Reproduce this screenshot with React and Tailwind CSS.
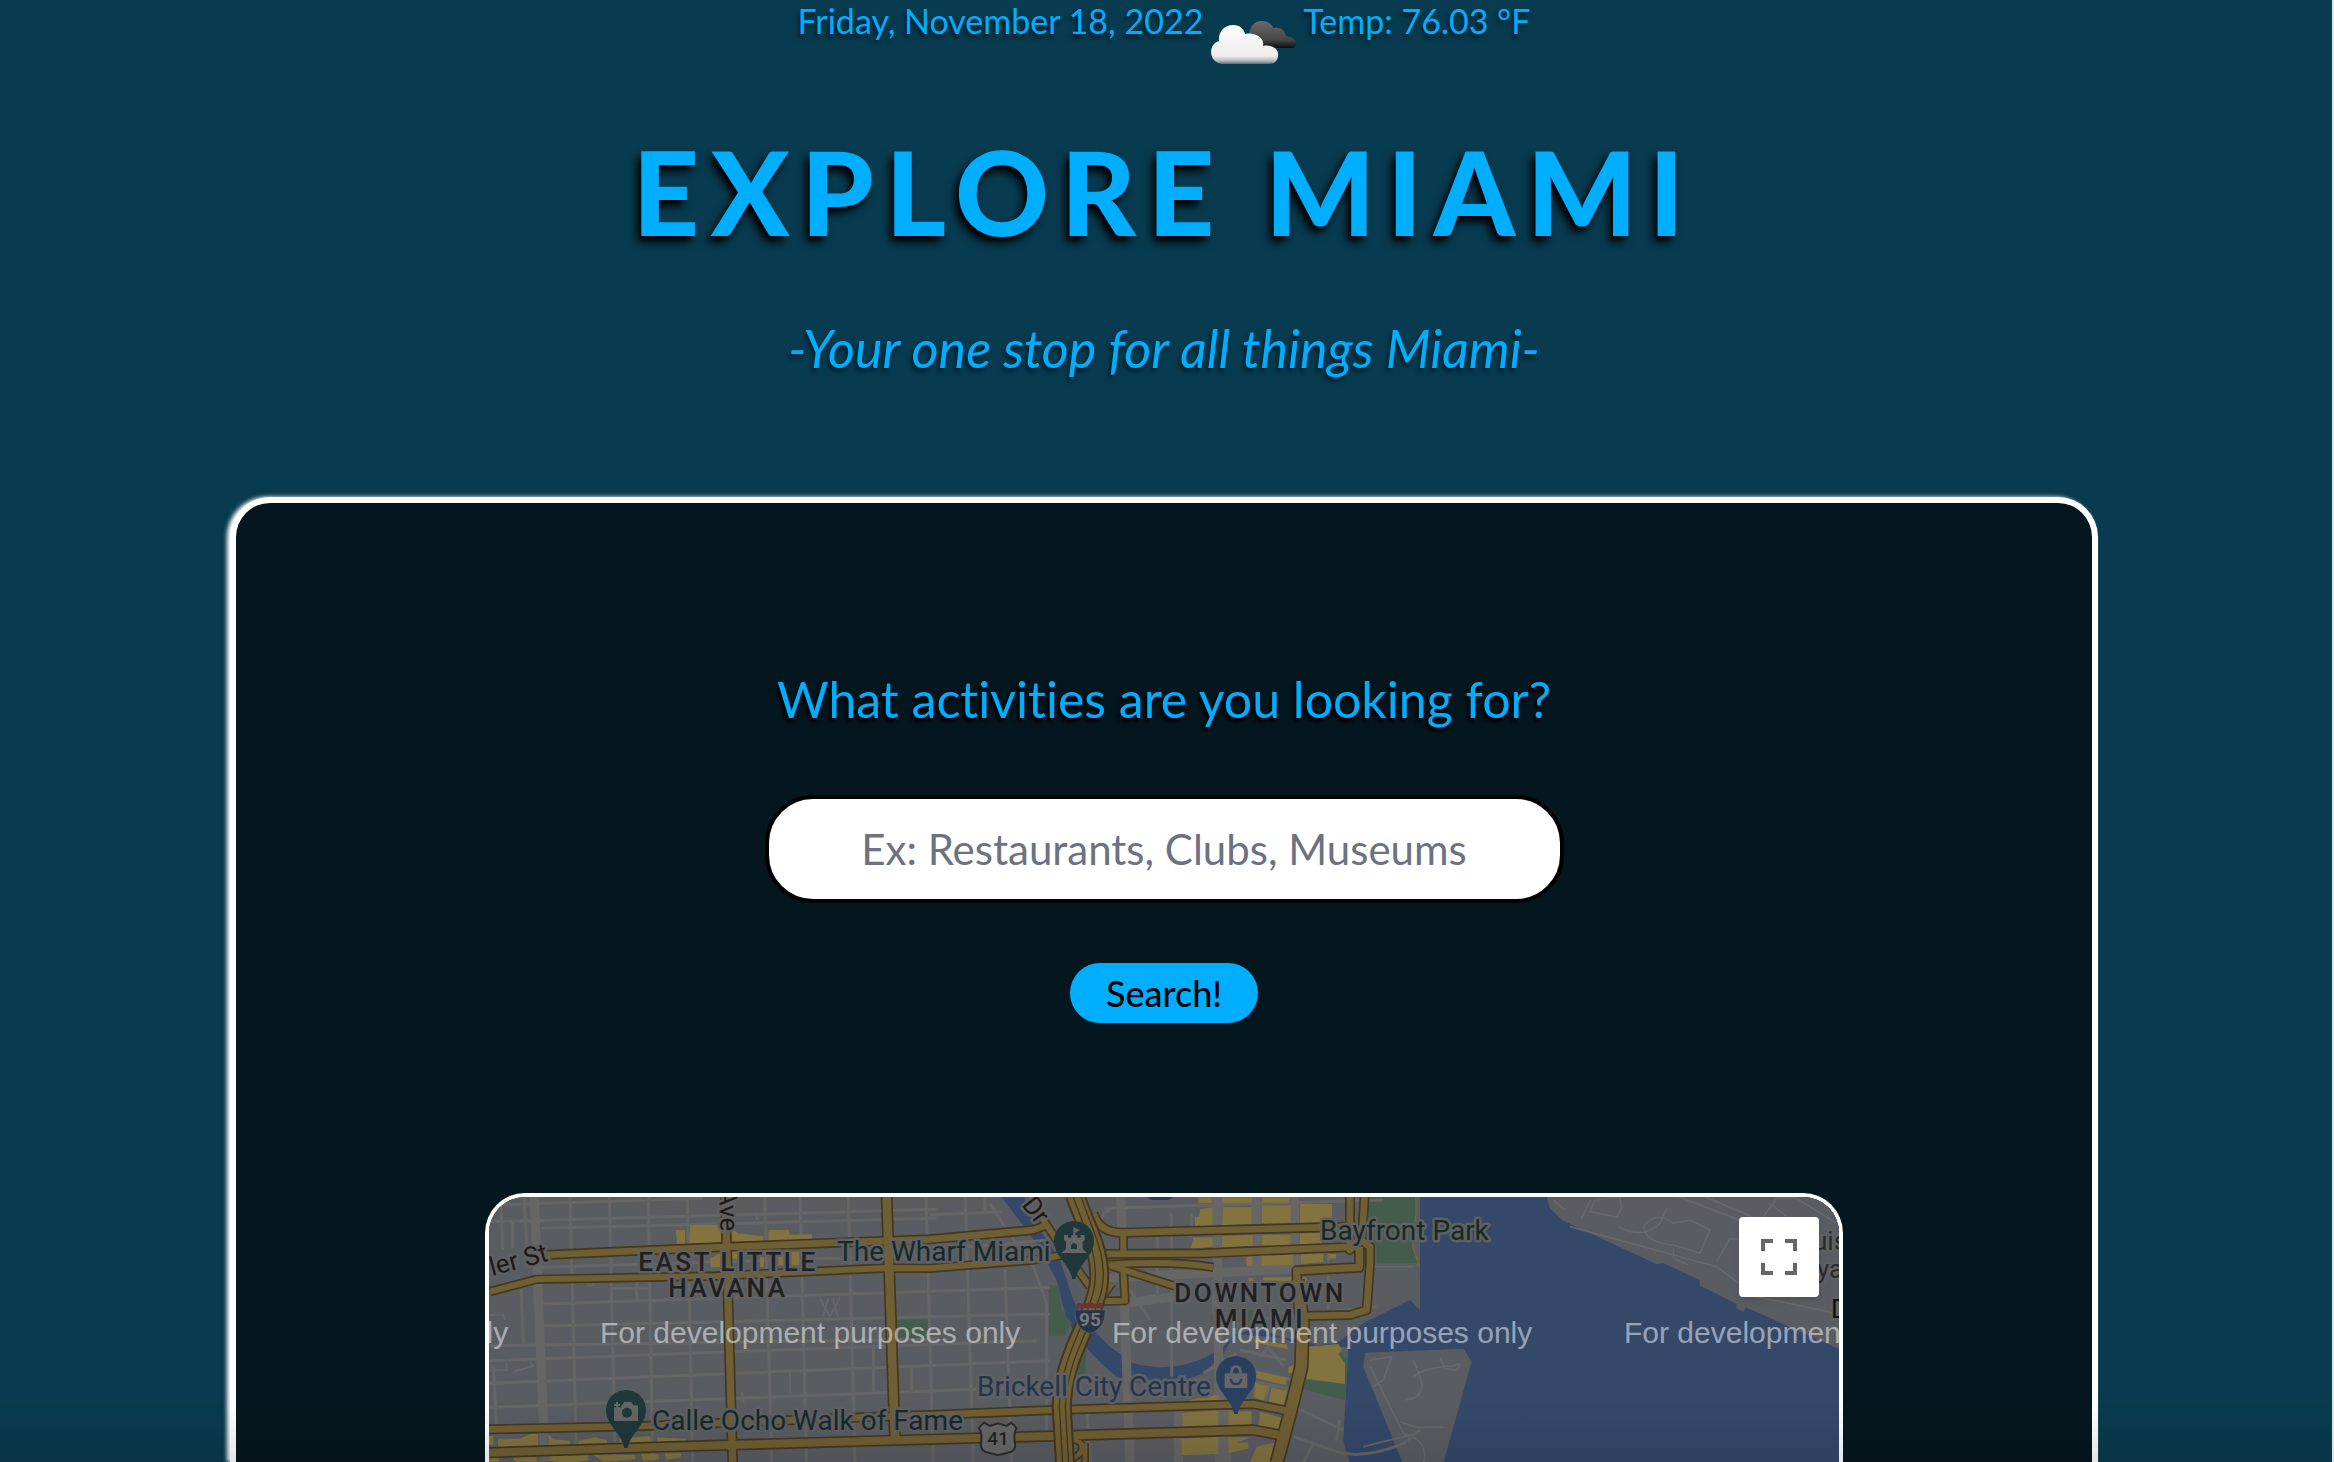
import React from "react";

const LAND = "#595c61";
const STREET = "#666666";
const WATER = "#34486a";
const PARK = "#435c4c";
const BUILT = "#82733f";

/* Map geometry is drawn in thirds of a pixel. */
const water = [
  "M1590 45L1700 190L1760 300L1790 420Q1850 520 1940 590L2010 610L2120 610L2200 580L2260 520L2290 470L2360 440L2500 500L2600 490L2680 430L2820 360L2850 390L2850 45L4110 45V850H2640L2620 780L2635 500L2560 500L2480 478L2300 462Q2240 530 2140 555Q2060 570 1990 550L1920 500L1850 430L1810 360L1770 240L1690 120L1660 45Z",
];
const land = [
  "M3228 45L3240 85L3275 120L3560 253L3580 250L3690 300L3688 316L3800 372L3797 384L3820 395L3828 382L4110 508V45Z",
  "M2685 518L2980 506L3005 545L2920 850H2798L2680 560Z",
  "M2838 45L2850 345L2700 400L2680 45Z",
];
const parks = [
  "M2690 45H2840V100L2828 200L2845 250L2720 250L2720 200L2690 150Z",
  "M1737 315L1764 318L1775 390L1805 430L1785 467H1737Z",
  "M1278 420L1372 416L1375 478L1283 480Z",
  "M1830 520L1850 500L1845 590L1820 620Z",
  "M2510 600L2610 610L2620 540L2600 505L2635 540L2625 660L2500 628Z",
  "M2330 390H2350V450H2325Z",
];
const built = [
  "M617 150H645V195H622ZM660 135H757V190H658ZM785 140L802 160L880 168V185H785ZM895 150H955L960 164L1026 163V178L895 186Z",
  "M720 235L745 222H752V262H722ZM785 210H802V238H785ZM870 232H882V260H870ZM925 215H988V256H925Z",
  "M57 768H70V795H57ZM84 778L150 776L180 762H204V798L84 802ZM236 764L250 778L300 782V797H236ZM325 783L375 772L410 780V795H325ZM448 775L540 768L545 790H448ZM560 772L648 776V786L560 788Z",
  "M57 832H86V850H57ZM125 828L200 826V850H140ZM238 824L355 822V840L300 850L238 842ZM370 824H496V838L400 845ZM512 822H566V838L520 843ZM582 820H633V832L590 840Z",
  "M2185 52H2225V70H2185ZM2255 52H2345V70H2255ZM2375 52H2458V68H2375ZM2190 88L2228 82V138H2175V110H2187ZM2258 82H2345V132L2256 136ZM2375 76H2462V130H2375ZM2490 72H2586V126L2490 128Z",
  "M2170 172H2228V200L2162 206ZM2256 168L2348 164V198L2256 202ZM2375 164H2462V196L2375 200ZM2490 160L2555 158V194L2490 196ZM2328 230H2348V258H2330ZM2375 224L2470 220V254L2375 258ZM2492 218L2560 214V246L2492 252ZM2575 222H2598V236H2575Z",
  "M2335 294H2350V304H2335ZM2380 292H2510V304H2380ZM2350 478L2450 494L2455 508L2355 488Z",
  "M2515 500L2605 492L2615 508L2605 524L2625 550V612L2510 596Z",
  "M2360 574L2450 592L2448 616L2358 594ZM2455 560L2470 556V580H2455ZM2355 608L2395 618L2382 662L2352 652ZM2405 622L2450 634L2440 680L2396 664ZM2245 645L2245 664L2148 666L2190 652Z",
  "M2138 698L2245 690V738L2138 742ZM2275 694H2345V736L2275 738ZM2370 696L2440 714L2430 752L2366 738ZM2135 776L2245 770V822L2135 826ZM2275 772H2340L2300 788H2335V806L2275 820ZM2360 800L2420 786L2412 846H2340Z",
];

const thinStreets = [
  "M57 125L1400 88M57 75L700 55M215 145L1400 115M215 262L1400 225M220 372L1740 322M215 438L1740 402M57 497L1400 478M57 542L1700 482M57 610L1740 542M57 682L1740 620M1380 210L1740 180M1380 104L1600 95",
  "M300 51L320 850M418 51L436 850M535 51L548 850M652 51L668 850M884 51L905 850M990 51L1010 850M1135 51L1155 850M1368 51L1390 850M92 51L98 210M128 125V205M162 51L170 200M152 300L160 490M70 560L80 740",
  "M1486 51L1510 850M1605 270L1625 850M1560 70Q1620 170 1690 260L1730 370V780M1850 680L1862 850M420 325H535M500 300V360M1210 500V635M1325 565V640M1545 100V50",
  "M1900 85L2740 60M1960 300L2040 420M1920 90Q1880 100 1900 160M2165 100V170M2062 150V350M2105 100V590M2230 300V400M2575 205V430M2360 420L2720 380M2310 510L2450 540M2200 580L2300 520",
  "M2370 530L2395 500L2440 560M2350 574L2470 600M2340 602L2460 628M2400 610L2385 670M2450 620L2430 690M2470 770L2600 815Q2680 840 2800 790L2850 750",
  "M2470 680L2620 750M2530 790L2500 850M2610 720L2600 780",
];
const wideStreets = [
  "M193 51L225 850M1952 51L1980 850M2240 51L2250 850M2357 51L2362 260M2472 51L2478 290",
  "M1900 295L2500 265M1950 370L2120 350M2125 680V850M2270 600V850",
];
const faintStreets = [
  "M60 405H100L106 420M60 570H110V545M130 575L190 558L180 545M855 95L862 120M1050 355L1080 410L1110 352M1058 410L1075 355M1088 355L1104 412M960 575V640M815 635L822 670M350 290L355 315H370V300",
  "M3360 60L3335 115M3375 60L3450 52L3455 85L3440 112L3360 95ZM3445 140Q3520 180 3570 130L3590 85M3520 140Q3560 90 3610 130L3660 120L3720 150L3690 220L3610 195Q3530 190 3520 140M3610 205V235L3655 254M3740 245L3780 175L3810 180M3300 140L3740 260L3860 350L4100 400",
  "M3600 40L3860 140M3680 40L3870 120M3880 110L3920 55H3980L4100 130M3900 70L3950 110M3250 60L3285 90M2710 260H2830",
  "M2700 560L2800 760Q2880 780 2860 850M2810 660Q2870 650 2850 590L2830 540M2700 540L2765 530L2740 600L2710 620M2830 590Q2870 560 2950 558Q2985 540 2960 570L2920 565M2910 535L2925 565M2790 725L2840 742H2920M2680 800L2840 760",
];

const yellowRoads = [
  { w: 20, d: "M215 225L740 202L1100 188L1380 178L1690 150L1730 135" },
  { w: 18, d: "M60 335L200 298L740 288L1250 264L1380 265L1690 240L1780 225" },
  { w: 22, d: "M766 51L770 200L778 500L788 850" },
  { w: 26, d: "M1250 51L1262 400L1275 780" },
  { w: 20, d: "M57 748L520 738L1180 712L1380 705L1750 690L2350 672L2450 692" },
  { w: 24, d: "M57 818L600 800L1380 778L1750 768L2350 750L2430 765" },
  { w: 18, d: "M1700 90L1780 210L1860 320" },
  { w: 20, d: "M1870 100Q1890 160 1960 158L2640 140" },
  { w: 20, d: "M1900 222L2200 220L2660 200" },
  { w: 18, d: "M1900 255Q2100 240 2230 262" },
  { w: 18, d: "M1960 160V215M1960 270L1965 362L1890 364" },
  { w: 18, d: "M1925 310L1890 360M1900 250L2120 320" },
  { w: 20, d: "M2640 45V210L2676 170L2684 45M2672 180L2700 200V250L2690 390L2640 405L2500 408" },
  { w: 22, d: "M2668 200V262L2480 272L2482 330" },
  { w: 34, d: "M2482 300L2498 430L2494 560L2460 700L2420 850" },
  { w: 14, d: "M1800 780Q1850 780 1830 820L1790 850M1845 790V850" },
];

const Halo = ({ children, className, ...props }) => (
  <text
    paintOrder="stroke"
    stroke="#5e6063"
    strokeWidth="5"
    strokeLinejoin="round"
    className={className}
    {...props}
  >
    {children}
  </text>
);

function Pin({ x, y, color, children }) {
  return (
    <g transform={`translate(${x} ${y})`}>
      <path
        d="M-5 174C-14 128-60 106-60 60A60 60 0 0 1 60 60C60 106 14 128 5 174Z"
        fill={color}
      />
      {children}
    </g>
  );
}

function MapArt() {
  return (
    <svg className="block h-[600px] w-full font-['Roboto',sans-serif]" role="img" aria-label="Map of downtown Miami">
      <g transform="translate(-19 -17) scale(0.333333)" fill="none">
        <rect x="0" y="0" width="7000" height="2000" fill={LAND} />
        {water.map((d) => <path key={d} d={d} fill={WATER} />)}
        {land.map((d) => <path key={d} d={d} fill={LAND} />)}
        {parks.map((d) => <path key={d} d={d} fill={PARK} />)}
        {faintStreets.map((d) => <path key={d} d={d} stroke="#66686b" strokeWidth="5" />)}
        {thinStreets.map((d) => <path key={d} d={d} stroke={STREET} strokeWidth="9" />)}
        {wideStreets.map((d) => <path key={d} d={d} stroke={STREET} strokeWidth="28" />)}
        {built.map((d) => <path key={d} d={d} fill={BUILT} />)}
        <path d="M2838 45V100L2828 200L2845 250V258" stroke="#7a6636" strokeWidth="4" />
        {yellowRoads.map((r) => (
          <path key={r.d} d={r.d} stroke="#45371e" strokeWidth={r.w + 10} strokeLinejoin="round" />
        ))}
        {yellowRoads.map((r) => (
          <path key={r.d} d={r.d} stroke="#6f5f34" strokeWidth={r.w} strokeLinejoin="round" />
        ))}
        <path d="M1815 45C1850 150 1900 220 1885 320C1870 420 1780 520 1775 680L1785 850" stroke="#45371e" strokeWidth="60" />
        <path d="M1815 45C1850 150 1900 220 1885 320C1870 420 1780 520 1775 680L1785 850" stroke="#6f5f34" strokeWidth="48" />
        <path d="M1808 45C1843 150 1888 220 1873 320C1858 420 1773 520 1768 680L1778 850M1832 45C1865 150 1912 220 1897 320C1880 420 1792 520 1786 680L1796 850" stroke="#45371e" strokeWidth="4" />

        <Pin x="468" y="630" color="#1e383b">
          <path d="M-36 46H-12L-6 36H16L22 46H36V93H-36Z" fill="#666" />
          <circle cx="3" cy="68" r="15" fill="#1e383b" />
          <path d="M-36 38H-14V52H-36Z" fill="#1e383b" />
          <path d="M-27 36V54M-36 45H-18" stroke="#666" strokeWidth="6" />
        </Pin>
        <Pin x="1812" y="123" color="#1e383b">
          <path d="M-30 42H-18V50H-8V42H-2V18L18 28L4 34V42H10V50H20V42H32V56L26 62V84L40 96H-38L-24 84V62L-30 56Z" fill="#666" />
          <path d="M-9 84V72Q0 60 9 72V84Z" fill="#1e383b" />
        </Pin>
        <Pin x="2298" y="528" color="#283f60">
          <path d="M-34 52H34V96H-34Z" fill="#666" />
          <path d="M-14 54C-16 24 16 24 14 54" stroke="#666" strokeWidth="8" />
          <path d="M-16 68C-12 90 12 90 16 68" stroke="#283f60" strokeWidth="7" />
        </Pin>

        <path d="M1815 390H1905C1906 430 1890 450 1860 461C1830 450 1814 430 1815 390Z" fill="#263549" stroke="#5d6268" strokeWidth="2" />
        <path d="M1818 384L1824 368L1842 372L1860 366L1878 372L1896 368L1903 384Z" fill="#6b3238" />
        <path d="M1542 728L1560 738L1584 730L1610 738L1624 728L1640 744C1620 770 1650 800 1625 815L1584 826L1544 815C1518 800 1548 770 1526 744Z" fill="#676767" stroke="#2b2b2b" strokeWidth="6" />
        <path d="M2032 45H2108V52Q2100 60 2090 60H2050Q2040 60 2032 50Z" fill="#263c5c" />
      </g>

      <text x="601" y="129" textAnchor="middle" className="text-[19px] font-bold" fill="#77797c">95</text>
      <text x="509" y="248" textAnchor="middle" className="text-[19px] font-medium" fill="#242424">41</text>

      <g className="text-[28px]">
        <Halo x="348" y="64" fill="#17292a">The Wharf Miami</Halo>
        <Halo x="163" y="233" fill="#17292a">Calle Ocho Walk of Fame</Halo>
        <Halo x="488" y="199" fill="#24344f">Brickell City Centre</Halo>
        <Halo x="831" y="43" fill="#182a20">Bayfront Park</Halo>
      </g>
      <g className="text-[26px] font-medium tracking-widest" fill="#202020" textAnchor="middle">
        <Halo x="239" y="74">EAST LITTLE</Halo>
        <Halo x="239" y="100">HAVANA</Halo>
        <Halo x="771" y="105">DOWNTOWN</Halo>
        <Halo x="771" y="131">MIAMI</Halo>
      </g>
      <g className="text-[26px]" fill="#211712">
        <Halo transform="translate(3 79) rotate(-15)">ler St</Halo>
        <Halo transform="translate(230 -8) rotate(88)">Ave</Halo>
        <Halo transform="translate(532 8) rotate(52)">Dr</Halo>
      </g>
      <g className="text-[26px]" fill="#292a2c">
        <Halo x="1324" y="53">uis</Halo>
        <Halo x="1328" y="81">ya</Halo>
        <Halo x="1342" y="121" fill="#111111">D</Halo>
      </g>
      <g className="font-['Liberation_Sans',sans-serif] text-[30px]" fill="#ffffff" fillOpacity="0.5">
        <text x="-401" y="146">For development purposes only</text>
        <text x="111" y="146">For development purposes only</text>
        <text x="623" y="146">For development purposes only</text>
        <text x="1135" y="146">For development purposes only</text>
      </g>
    </svg>
  );
}

function CloudIcon() {
  return (
    <svg className="h-[84px] w-[100px] shrink-0" viewBox="0 0 100 84" role="img" aria-label="Broken clouds">
      <defs>
        <linearGradient id="front" x1="0" y1="0" x2="0" y2="1">
          <stop offset="0" stopColor="#ffffff" />
          <stop offset="0.8" stopColor="#ececec" />
          <stop offset="0.92" stopColor="#b5b5b5" />
          <stop offset="1" stopColor="#5c6a70" />
        </linearGradient>
        <linearGradient id="back" x1="0" y1="0" x2="0" y2="1">
          <stop offset="0" stopColor="#6a6a6a" />
          <stop offset="0.7" stopColor="#464646" />
          <stop offset="1" stopColor="#0c0c0c" />
        </linearGradient>
      </defs>
      <path d="M46 34C47 26 52 21 58 21C65 21 69 24 70 28C76 26 82 30 83 36C93 37 96 45 90 48H60Z" fill="url(#back)" />
      <path d="M19 64C5 62 5 44 16 41C15 31 22 25 30 25C37 25 41 29 42 34C52 32 62 38 60 46C70 44 76 50 75 55C75 61 71 64 67 64Z" fill="url(#front)" />
    </svg>
  );
}

export default function App() {
  return (
    <div className="h-screen overflow-hidden border-r-2 border-[#dfe3e5] bg-[#083b4f] font-['Lato',sans-serif] text-[#00aeff] [font-variant-ligatures:none]">
      <div className="relative flex h-full flex-col pr-1">
        <header className="flex flex-col items-center">
          <div className="flex items-start justify-center text-[34px] leading-[42px] [text-shadow:-2px_4px_4px_rgba(0,0,0,0.5)]">
            <p>Friday, November 18, 2022</p>
            <CloudIcon />
            <p>Temp: 76.03 °F</p>
          </div>
          <h1 className="mt-10 text-[116px] leading-[136px] font-black tracking-widest [text-shadow:-4px_6px_8px_#000]">
            EXPLORE MIAMI
          </h1>
          <p className="mt-14 text-[52px] leading-[64px] italic [text-shadow:-2px_4px_4px_rgba(0,0,0,0.5)]">
            -Your one stop for all things Miami-
          </p>
        </header>

        <main className="mx-[230px] mt-[117px] flex min-h-0 flex-1 flex-col items-center rounded-t-[40px] border-6 border-b-0 border-white bg-[#05171e] shadow-[-3px_0_4px_#fff]">
          <form className="flex flex-col items-center" onSubmit={(e) => e.preventDefault()}>
            <label htmlFor="activity" className="mt-[164px] text-[50px] leading-[64px] [text-shadow:-2px_4px_4px_#000]">
              What activities are you looking for?
            </label>
            <input
              id="activity"
              type="text"
              placeholder="Ex: Restaurants, Clubs, Museums"
              className="mt-16 h-[108px] w-[799px] rounded-[48px] border-4 border-black bg-white text-center text-[42px] text-black placeholder:text-[#6b7280]"
            />
            <button
              type="submit"
              className="mt-[60px] h-[60px] w-[188px] rounded-full bg-[#00aeff] text-4xl leading-[60px] font-medium text-black"
            >
              Search!
            </button>
          </form>
          <section className="relative mt-[170px] min-h-0 w-[1358px] flex-1 overflow-hidden rounded-t-[40px] border-4 border-b-0 border-white">
            <MapArt />
            <button
              type="button"
              aria-label="Toggle fullscreen view"
              className="absolute top-5 right-5 flex size-20 items-center justify-center rounded-sm bg-white shadow-md"
            >
              <svg className="size-9" viewBox="0 0 36 36" fill="#666666">
                <path d="M0 0H12V4H4V12H0ZM24 0H36V12H32V4H24ZM0 24H4V32H12V36H0ZM32 24H36V36H24V32H32Z" />
              </svg>
            </button>
          </section>
        </main>
        <div className="pointer-events-none absolute inset-x-0 bottom-0 h-16 bg-linear-to-b from-transparent to-black/10" />
      </div>
    </div>
  );
}
